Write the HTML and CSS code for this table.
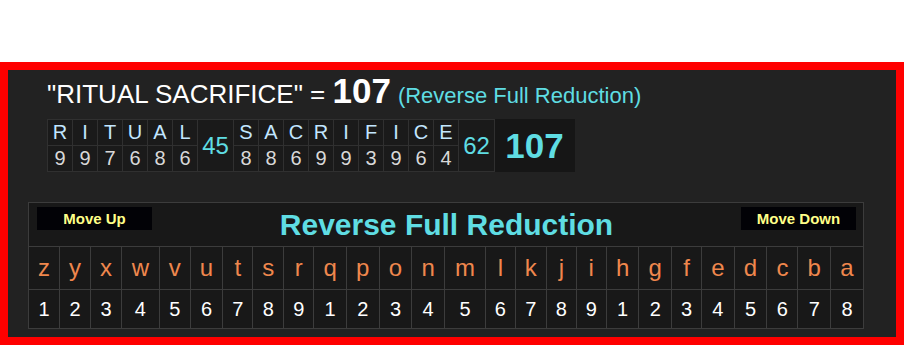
FILE: index.html
```html
<!DOCTYPE html>
<html>
<head>
<meta charset="utf-8">
<link rel="stylesheet" href="styles.css">
</head>
<body>
<div class="frame">
  <div class="title">
    <span class="t-phrase">"RITUAL SACRIFICE" = </span>
    <span class="t-total">107</span>
    <span class="t-cipher">(Reverse Full Reduction)</span>
  </div>
  <table class="breakdown">
    <tr>
      <td class="ch">R</td><td class="ch">I</td><td class="ch">T</td><td class="ch">U</td><td class="ch">A</td><td class="ch">L</td>
      <td class="word" rowspan="2">45</td>
      <td class="ch">S</td><td class="ch">A</td><td class="ch">C</td><td class="ch">R</td><td class="ch">I</td><td class="ch">F</td><td class="ch">I</td><td class="ch">C</td><td class="ch">E</td>
      <td class="word w2" rowspan="2">62</td>
      <td class="sum" rowspan="2">107</td>
    </tr>
    <tr>
      <td class="nv">9</td><td class="nv">9</td><td class="nv">7</td><td class="nv">6</td><td class="nv">8</td><td class="nv">6</td>
      <td class="nv">8</td><td class="nv">8</td><td class="nv">6</td><td class="nv">9</td><td class="nv">9</td><td class="nv">3</td><td class="nv">9</td><td class="nv">6</td><td class="nv">4</td>
    </tr>
  </table>
  <table class="chart">
    <tr>
      <th colspan="26" class="head">
        <div class="head-row">
          <button class="move">Move Up</button>
          <span class="chart-title">Reverse Full Reduction</span>
          <button class="move">Move Down</button>
        </div>
      </th>
    </tr>
    <tr class="letters">
      <td>z</td><td>y</td><td>x</td><td>w</td><td>v</td><td>u</td><td>t</td><td>s</td><td>r</td><td>q</td><td>p</td><td>o</td><td>n</td><td>m</td><td>l</td><td>k</td><td>j</td><td>i</td><td>h</td><td>g</td><td>f</td><td>e</td><td>d</td><td>c</td><td>b</td><td>a</td>
    </tr>
    <tr class="values">
      <td>1</td><td>2</td><td>3</td><td>4</td><td>5</td><td>6</td><td>7</td><td>8</td><td>9</td><td>1</td><td>2</td><td>3</td><td>4</td><td>5</td><td>6</td><td>7</td><td>8</td><td>9</td><td>1</td><td>2</td><td>3</td><td>4</td><td>5</td><td>6</td><td>7</td><td>8</td>
    </tr>
  </table>
</div>
</body>
</html>
```
FILE: styles.css
```css
html, body {
  margin: 0;
  padding: 0;
  background: #ffffff;
}

body {
  font-family: "Liberation Sans", Arial, sans-serif;
}

.frame {
  margin-top: 62px;
  border: 8px solid #ff0000;
  background: #222222;
  height: 267px;
  padding: 0 0 0 20px;
  box-sizing: content-box;
}

.title {
  display: flex;
  align-items: baseline;
  margin-left: 19px;
  height: 49px;
  color: #ffffff;
  white-space: pre;
}

.t-phrase {
  font-size: 26px;
  line-height: 49px;
}

.t-total {
  font-size: 35px;
  font-weight: bold;
}

.t-cipher {
  font-size: 22px;
  color: #5fdde3;
  margin-left: 7px;
}

.breakdown {
  margin-left: 19px;
  border-collapse: collapse;
  background: #1a1a1a;
}

.breakdown td {
  padding: 0;
  border: 1px solid #303030;
  text-align: center;
}

.breakdown .ch {
  width: 24px;
  height: 25px;
  font-size: 20px;
  color: #c2e6ff;
}

.breakdown .nv {
  width: 24px;
  height: 25px;
  font-size: 20px;
  color: #d8d8d8;
}

.breakdown .word {
  width: 35px;
  font-size: 24px;
  color: #5fdde3;
}

.breakdown .w2 {
  width: 35px;
}

.breakdown .sum {
  width: 79px;
  font-size: 35px;
  font-weight: bold;
  color: #5fdde3;
  background: #161616;
  border-color: #161616;
}

.chart {
  margin-top: 30px;
  width: 836px;
  border-collapse: collapse;
  background: #181818;
}

.chart td, .chart th {
  border: 1px solid #3c3c3c;
  padding: 0 6px;
  text-align: center;
}

.chart .head {
  height: 43px;
  vertical-align: top;
  padding: 0;
}

.head-row {
  display: flex;
  justify-content: space-between;
  align-items: flex-start;
  padding: 4px 7px 0 8px;
}

.move {
  width: 115px;
  height: 23px;
  margin: 0;
  padding: 0;
  border: none;
  background: #020206;
  color: #ffff88;
  font-family: "Liberation Sans", Arial, sans-serif;
  font-size: 15px;
  font-weight: bold;
}

.chart-title {
  font-size: 30px;
  font-weight: bold;
  color: #5fdde3;
  line-height: 36px;
}

.letters td {
  height: 42px;
  font-size: 24px;
  color: #ef874d;
}

.values td {
  height: 38px;
  font-size: 20px;
  color: #ffffff;
}
```
